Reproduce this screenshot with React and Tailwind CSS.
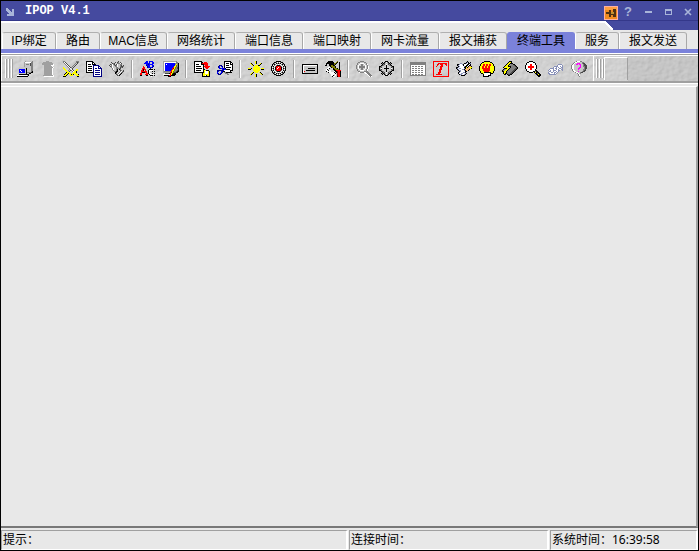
import { useState } from "react";
import clsx from "clsx";

const PALETTE = {
  k: "#000000",
  w: "#ffffff",
  g: "#808080",
  h: "#a0a0a0",
  s: "#c6c6c6",
  d: "#484848",
  y: "#ffff00",
  o: "#808000",
  r: "#ff0000",
  e: "#800000",
  b: "#0000ff",
  n: "#000080",
  m: "#ff00ff",
  p: "#8890b8",
  t: "#ffb870",
};

const ICONS = {
  connect: [
    "........hssssssg",
    ".......hwwwwwwgg",
    ".......hsssssdgg",
    ".......hsgggsdgg",
    ".......hsssssdgg",
    ".......hssssssgg",
    "..ssssssssssssgg",
    ".sssssssskssssgg",
    ".sbbbbbbskssssgg",
    ".sbwbbbbskssssgg",
    ".sbbwbbbskssssgk",
    ".sbbbbbbskggggkk",
    ".ssssssssksskk..",
    "..kkkkkkkkkk....",
    "wwwwwwwwwwsk....",
    "kkkkkkkkkkk.....",
  ],
  remove: [
    "......hhh.......",
    "...hhhhhhhhh....",
    "..hhhhhhhhhhh...",
    "..hhhhhhhhhhhw..",
    "....hhhhhhhwww..",
    "....hhhhhhhhw...",
    "....hhhhhhhhhw..",
    "....hhhhhhhhw...",
    "....hhhhhhhhw...",
    "....hhhhhhhhw...",
    "....hhhhhhhhw...",
    "....hhhhhhhhw...",
    "....hhhhhhhhw...",
    "....hhhhhhhhw...",
    "...hhhhhhhhhhw..",
    "....wwwwwwwwww..",
  ],
  swords: [
    "gg...........ggg",
    "gwd..........gdg",
    ".gwd........gsd.",
    "..gwd......gsd..",
    "...gwd....gsd...",
    "....gwd..gsd....",
    "y....gwdgsd.....",
    "yy....gwsd......",
    ".yy...gswd...yy.",
    "..yy.gsdgwd.yyy.",
    "...yysd..gwyyk..",
    "...kyyy...yyyk..",
    "..kyykyy.yyyyy..",
    ".kyyk.yykyk.yyyk",
    ".yyk...yyy...yyy",
    "kkk...........kk",
  ],
  copy: [
    "kkkkkkk.........",
    "kwwwwwkk........",
    "kwwwwwkwk.......",
    "kwkkkwkkkk......",
    "kwwwwwwnnnnnn...",
    "kwkkkkwnwwwwnn..",
    "kwwwwwwnwwwwnwn.",
    "kwkkkkwnwnnwnnnn",
    "kwwwwwwnwwwwwwwn",
    "kwkkkkwnwnnnnnwn",
    "kwwwwwwnwwwwwwwn",
    "kkkkkkknwnnnnnwn",
    ".......nwwwwwwwn",
    ".......nwnnnnnwn",
    ".......nwwwwwwwn",
    ".......nnnnnnnnn",
  ],
  plugs: [
    ".........d......",
    "..d...d.dg.d....",
    "...dgd..gggwd...",
    ".dgwgd.dwssgg...",
    "d.gwsgdgwssgd.d.",
    ".dgwssggwssgddg.",
    "..gwsssggssdgd..",
    "...gwssggggd....",
    "...gwssgk.kg....",
    "....gssgk..dg.d.",
    ".....ggkk..gwgd.",
    "......kk..gwgd..",
    "......kg.gwgk...",
    ".......dgwgk....",
    "........dgk.....",
    "................",
  ],
  encoding: [
    "......bb.bbbb...",
    ".....bbb.b..bb..",
    "....bbbbbb..bb..",
    "......bbnbbbb...",
    "......nbbb..bb..",
    "...r...nbb..bn..",
    "...rr..nbbbbn...",
    "..rrr.....n.....",
    "..rkrr...kkkk.k.",
    ".rrk.r..kwwww...",
    ".rrrrrr.kw..k.k.",
    ".rkkkrr.kw......",
    "rr....rrkww.k.k.",
    "rr...rrr.kwwww..",
    "kk....kk..kkk.k.",
    "...........w....",
  ],
  display: [
    "hhhhhhhhhhhhhg..",
    "hwwwwwwwwwwwwgg.",
    "hwbbbbbbbbbbgggk",
    "hwbwbbbbbbbbgygk",
    "hwbbbbbbbbbbyogk",
    "hwbbbbbbbbbyyogk",
    "hwbbbbbbbbryogdk",
    "hwbbbbbbbreyogdk",
    "hwbbbbbbbryogggk",
    "hwbbbbbbryyoggdk",
    "hgggggggryoggdkk",
    "hhhhhhhreyoddkk.",
    "..ddddkryokkk...",
    "wwwwwwwrykkkk...",
    ".kkkkkrrkkkk....",
    ".....kkk........",
  ],
  exportFile: [
    "kkkkkkkk........",
    "kwwwwwwkk.rrr...",
    "kwwwwwwkrrrrrr..",
    "kwkkkwwkkkrrrr..",
    "kwwwwwwwwk.rrr..",
    "kwkkkkkwwkrrrrrr",
    "kwwwwwwwwk.rrrr.",
    "kwkkkkkkwk..rr..",
    "kwwwwwwwwkk.....",
    "kwkkkkkwwkyykkk.",
    "kwwwwwwwwkywwwyk",
    "kkkkkkkkkkywwwyk",
    "........kyywwwyk",
    "........kyyyyyyk",
    "........kyywkyyk",
    "........kkkkkkkk",
  ],
  cutFile: [
    ".......kkkkkkk..",
    ".......kwwwwwkk.",
    ".......kwkkkwkwk",
    ".......kwwwwwkkk",
    "..nnn..kwkkkwwwk",
    ".nb.bn.kwwwwwwwk",
    ".nb..b.kwkkkkkwk",
    "..bnbbnbkwwwwwwk",
    ".....bnbbkkkkwwk",
    "nnnnnnbwwwwwwkkk",
    "nb..bnkkwwwwwk..",
    "b...bn.ggkkkkkk.",
    "bn.bn...ggg.....",
    ".nnn......gg....",
    "................",
    "................",
  ],
  sun: [
    ".......yk.......",
    ".......yk.......",
    "..yk...yk...yk..",
    "...yk......yk...",
    "....yk.yyykk....",
    "......yyyyy.....",
    ".....yyyyyyy....",
    "yyyk.yyyyyyy.yyy",
    "kkk..yyyyyyy.kkk",
    ".....yyyyyyy....",
    "......yyyyy.....",
    "....yk.yyy.yk...",
    "...yk.......yk..",
    "..yk...yk....yk.",
    ".......yk.......",
    ".......yk.......",
  ],
  target: [
    ".....kkkkk......",
    "...kkgwgwgkk....",
    "..kgwkgkgkwgk...",
    ".kgkgwswswgkgk..",
    ".kwgwgkkkgwgwk..",
    "kgkwgerrregwkgk.",
    "kwgskrrwrrksgwk.",
    "kgkwkrwrrrkwkgk.",
    "kwgskrrrrrksgwk.",
    "kgkwgerrregwkgk.",
    ".kwgwgkkkgwgwk..",
    ".kgkgwswswgkgk..",
    "..kgwkgkgkwgk...",
    "...kkgwgwgkk....",
    ".....kkkkk......",
    "................",
  ],
  console: [
    "................",
    "................",
    "................",
    "kkkkkkkkkkkkkkkk",
    "kwwwwwwwwwwwwwwk",
    "kwsssssssssssssk",
    "kwsssssssssssssk",
    "kwsssskkkkkkkssk",
    "kwsssssssssssssk",
    "kwsskkkkkkkkkssk",
    "kwrssssssssssssk",
    "kwsssssssssssssk",
    "kkkkkkkkkkkkkkkk",
    "................",
    "................",
    "................",
  ],
  tools: [
    "...kkkkk....o...",
    "..kkkkkkk..ok.k.",
    ".kkkkkkkkook..k.",
    ".k..kkkkkok...k.",
    "kk..kkookk....k.",
    ".....kooook...k.",
    "...ww.koook...k.",
    "..wwk...koook.k.",
    ".wk.....kkooook.",
    ".wwkww...kkrrrrr",
    ".kwwww...wkkerrk",
    "...kwwwwwk.kerrk",
    ".....wwwwwk.errk",
    "......www.w.errk",
    "......wwk.w.errk",
    ".......kww..krrk",
  ],
  zoom: [
    "....gggg........",
    "..ggssssgg......",
    ".gsswwwwssg.....",
    ".gswsggswsgw....",
    "gsws.gg.swsg....",
    "gswggggggwsgw...",
    "gswggggggwsgw...",
    "gsws.gg.swsgw...",
    ".gswsggswsgw....",
    ".gsswwwwssgw....",
    "..ggssssgggg....",
    "...wggggwwggg...",
    ".........wwggg..",
    "...........wggg.",
    "............wggg",
    ".............wgw",
  ],
  gear: [
    "......kkk.......",
    "...k.kgwgk.k....",
    "..kgkdsssdkgk...",
    "...kgdswsdgk....",
    "..kdgs.k.sgdk...",
    "kkgs.s.k.s.sgkk.",
    "kgds...k...sdgk.",
    "ksws.kkkkk.swsk.",
    "kgds...k...sdgk.",
    "kkgs.s.k.s.sgkk.",
    "..kdgs.k.sgdk...",
    "...kgdswsdgk....",
    "..kgkdsssdkgk...",
    "...k.kgwgk.k....",
    "......kkk.......",
    "................",
  ],
  table: [
    "................",
    "gggggggggggggggg",
    "gggggggggggggggg",
    "gggggggggggggggg",
    "gwwwwwwwwwwwwwwg",
    "gwggwggwggwggwwg",
    "gwwwwwwwwwwwwwwg",
    "gwggwggwggwggwwg",
    "gwwwwwwwwwwwwwwg",
    "gwggwggwggwggwwg",
    "gwwwwwwwwwwwwwwg",
    "gwggwggwggwggwwg",
    "gwwwwwwwwwwwwwwg",
    "gwggwggwggwggwwg",
    "gggggggggggggggg",
    "................",
  ],
  font: [
    "rrrrrrrrrrrrrrrr",
    "r..............r",
    "r....rrrrrrrrr.r",
    "r...rr.rrr..rr.r",
    "r...r...rr...r.r",
    "r..r...rrr.....r",
    "r......rr......r",
    "r......rr......r",
    "r.....rrr......r",
    "r.....rr.......r",
    "r.....rr.......r",
    "r....rrr.......r",
    "r....rr........r",
    "r..rrrrrr......r",
    "r..............r",
    "rrrrrrrrrrrrrrrr",
  ],
  script: [
    "...........k....",
    "..........kpk.k.",
    "....pp..kkpwkkp.",
    ".kkpwwpkwwwkkwk.",
    ".kpwwwwkwwkkwkk.",
    "..kpwwwwpkkwkttk",
    "kkpwwwwwkkykttyy",
    "kpwppwwwpkttttyk",
    ".kpwwwppkttttk..",
    "..kppwwwpkttk...",
    "...kpwwwwkk.....",
    "..kpwwwppk......",
    "..kwwppwwpk.....",
    "...kppwwpk......",
    ".....kkkk.......",
    "................",
  ],
  hand: [
    ".....kkkkkk.....",
    "...kkyyyyyykk...",
    "..kyyyyyyyyyyk..",
    ".kyyrryrryrryyk.",
    ".kyyrryrryrryyk.",
    "kyyrryrryrryyyyk",
    "kyyrryrryrryyyyk",
    "kyyrrrrrrrryyyyk",
    "kyyyrrrrrrryyyyk",
    "kyyyrrrrrrryyyyk",
    ".kyyyrrrrryyyyk.",
    ".kyyykkkkkkkyyk.",
    "..kkywwwwwwkkk..",
    "....kwwwwwwk....",
    "....kwwwwkkk....",
    "....kkkkkk......",
  ],
  bolt: [
    ".......kkk......",
    "......kyyk......",
    ".....kyykkk.....",
    "....kyykhggkk...",
    "...kyykhggggdk..",
    "..kyyykkkggggdk.",
    ".kyyyyyykgggggdk",
    "..kkkyykgggggddk",
    ".kghyykgggggddk.",
    "kghyykgggggddk..",
    "kkyykgggggddk...",
    ".kyykggggddk....",
    ".kykkgggddk.....",
    "..kk.kddkk......",
    "......kk........",
    "................",
  ],
  magnify: [
    "....kkkk........",
    "..kkwwwwkk......",
    ".kwwwwwwwwk.....",
    ".kwwwrrwwwk.....",
    "kwwwwrrwwwwk....",
    "kwwrrrrrrwwk....",
    "kwwrrrrrrwwk....",
    "kwwwwrrwwwwk....",
    ".kwwwrrwwwk.....",
    ".kwwwwwwwwkk....",
    "..kkwwwwkkgkk...",
    "....kkkk.kykkk..",
    "..........kkgkk.",
    "...........kkykk",
    "............kkkk",
    ".............kk.",
  ],
  transfer: [
    "................",
    "................",
    "................",
    "..........pppp..",
    ".........pwwwwp.",
    "......ppppwwpwp.",
    ".....pwwpwpwwpp.",
    "..ppppwppwwpp.p.",
    ".pwwwpwwpwpwwpp.",
    "pwpwwpppwwpp..p.",
    ".ppwwpwwpwp.....",
    "pwwppwppwp......",
    "ppwwwwpwp.......",
    ".ppppppp........",
    "................",
    "................",
  ],
  help: [
    ".....gwwwgg.....",
    "...gwwsssssgg...",
    "..gwssmmmssgdd..",
    ".gwssmmsmmssgdd.",
    "gwwssssssmssgddd",
    "gwwssssssmssggdd",
    "gwwsssssmmsssgdd",
    "gwwssssmmssssgdd",
    ".gwssssmssssggd.",
    ".gwwssssssssgdd.",
    "..gwwssmsssgdd..",
    "....gwwssgdd....",
    "......gwsg......",
    ".......gws......",
    ".......gw.......",
    "........g.......",
  ],
};

const TOOL_GROUPS = [
  [
    ["connect", "连接"],
    ["remove", "删除"],
    ["swords", "断开"],
    ["copy", "复制"],
    ["plugs", "重连"],
  ],
  [
    ["encoding", "编码"],
    ["display", "显示设置"],
  ],
  [
    ["exportFile", "导出"],
    ["cutFile", "剪切"],
  ],
  [
    ["sun", "高亮"],
    ["target", "定位"],
  ],
  [
    ["console", "控制台"],
    ["tools", "工具"],
  ],
  [
    ["zoom", "缩放"],
    ["gear", "设置"],
  ],
  [
    ["table", "列表"],
    ["font", "字体"],
    ["script", "脚本"],
    ["hand", "停止"],
    ["bolt", "快速命令"],
    ["magnify", "查找"],
    ["transfer", "传输"],
    ["help", "帮助"],
  ],
];

const TABS = [
  ["IP绑定", "w-[54px]"],
  ["路由", "w-11"],
  ["MAC信息", "w-[67px]"],
  ["网络统计", "w-[68px]"],
  ["端口信息", "w-[68px]"],
  ["端口映射", "w-[68px]"],
  ["网卡流量", "w-[68px]"],
  ["报文捕获", "w-[68px]"],
  ["终端工具", "w-[68px]"],
  ["服务", "w-11"],
  ["报文发送", "w-[68px]"],
];

function PixelIcon({ name }) {
  return (
    <svg
      viewBox="0 0 16 16"
      className="w-4 h-4"
      shapeRendering="crispEdges"
      aria-hidden="true"
    >
      {ICONS[name].map((row, y) =>
        [...row].map((c, x) =>
          c === "." ? null : (
            <rect key={`${x}-${y}`} x={x} y={y} width="1" height="1" fill={PALETTE[c]} />
          )
        )
      )}
    </svg>
  );
}

function TitleBar() {
  const button = "w-5 h-[19px] pt-0.5 flex items-center justify-center text-[#a9b5d9]";

  return (
    <header>
      <div className="flex items-center h-5 bg-[#454a9f] border-b border-[#34388a]">
        <button aria-label="菜单" className="w-[18px] pt-0.5 flex justify-center text-[#a9b5d9]">
          <svg viewBox="0 0 8 8" className="w-2 h-2" shapeRendering="crispEdges">
            <path d="M0 0h2v1h1v1h1v1h1v1h1V1h2v7H1V6h2V5H2V4H1V3H0z" fill="currentColor" />
          </svg>
        </button>
        <h1 className="pl-1.5 flex-1 text-white text-[12px] leading-[18px] font-bold font-['Liberation_Mono',monospace]">
          IPOP V4.1
        </h1>
        <button aria-label="固定" className="w-3.5 h-[19px] pt-1 flex items-center">
          <svg viewBox="0 0 14 14" className="w-3.5 h-3.5" shapeRendering="crispEdges">
            <rect width="14" height="14" fill="#ffb0a0" />
            <rect x="1" y="1" width="12" height="12" fill="#f08a20" />
            <path d="M1 1h12v3H1z" fill="#ffa040" />
            <path d="M2 6h3v2H2zM5 4h2v2h2V3h3v8H9V9H7v2H5z" fill="#503010" />
            <path d="M7 6h3v2H7z" fill="#c09030" />
          </svg>
        </button>
        <button
          aria-label="帮助"
          className={clsx(button, "text-[13px] font-bold font-['Liberation_Sans',sans-serif]")}
        >
          ?
        </button>
        <button aria-label="最小化" className={button}>
          <svg viewBox="0 0 8 8" className="w-2 h-2" shapeRendering="crispEdges">
            <path d="M1 3h7v2H1z" fill="currentColor" />
          </svg>
        </button>
        <button aria-label="最大化" className={button}>
          <svg viewBox="0 0 8 8" className="w-2 h-2" shapeRendering="crispEdges">
            <path d="M1 1h7v6H1zM2 3v3h5V3z" fillRule="evenodd" fill="currentColor" />
          </svg>
        </button>
        <button aria-label="关闭" className={button}>
          <svg viewBox="0 0 8 8" className="w-2 h-2">
            <path d="M1 1l6 6M7 1L1 7" stroke="currentColor" strokeWidth="1.6" />
          </svg>
        </button>
      </div>
      <div className="flex h-[11px] items-start">
        <div className="flex-1 border-t-2 border-white" />
        <svg viewBox="0 0 10 9" className="w-2.5 h-[9px]" shapeRendering="crispEdges">
          <path d="M0 0h10v9z" fill="#454a9f" />
          <path d="M0 0l9 9" stroke="#fff" strokeWidth="2" />
        </svg>
        <div className="w-[84px] h-[9px] bg-[#454a9f]" />
      </div>
    </header>
  );
}

function TabBar({ active, onSelect }) {
  return (
    <nav
      role="tablist"
      className="flex pl-px border-b-4 border-[#7b82da] text-[12px] leading-[17px] whitespace-nowrap font-['Liberation_Sans','Noto_Sans_CJK_SC',sans-serif]"
    >
      {TABS.map(([tab, width]) => (
        <button
          key={tab}
          role="tab"
          aria-selected={tab === active}
          onClick={() => onSelect(tab)}
          className={clsx(
            "h-[17px] flex justify-center rounded-t-[3px] border-x border-t",
            width,
            tab === active
              ? "bg-[#7b82da] border-[#7b82da]"
              : "border-t-[#b0b0b0] border-l-white border-r-[#a8a8a8]"
          )}
        >
          {tab}
        </button>
      ))}
    </nav>
  );
}

function Texture() {
  return (
    <svg className="absolute inset-0 w-full h-full" aria-hidden="true">
      <filter id="stone" x="0" y="0" width="100%" height="100%">
        <feTurbulence type="fractalNoise" baseFrequency="0.2 0.24" numOctaves="2" seed="4" />
        <feDiffuseLighting surfaceScale="0.6" diffuseConstant="1.1" lightingColor="#d3d3d3">
          <feDistantLight azimuth="225" elevation="62" />
        </feDiffuseLighting>
      </filter>
      <rect width="100%" height="100%" filter="url(#stone)" />
    </svg>
  );
}

function Grip() {
  return (
    <div className="flex gap-px py-[3px]">
      <span className="w-0.5 border-l border-white border-r border-r-[#a0a0a0]" />
      <span className="w-0.5 border-l border-white border-r border-r-[#a0a0a0]" />
      <span className="w-0.5 border-l border-white border-r border-r-[#a0a0a0]" />
    </div>
  );
}

function ToolBar() {
  return (
    <div className="border-y border-white">
      <div className="relative h-[29px] bg-[#cacaca] border-t border-[#a0a0a0] border-b-2 border-b-[#a0a0a0]">
        <Texture />
        <div className="relative flex h-full pl-[3px] border-l border-t border-white">
          <Grip />
          <div className="flex items-center">
            {TOOL_GROUPS.map((group, i) => (
              <div key={group[0][0]} className="flex items-center">
                {i > 0 && (
                  <span className="w-0.5 h-[18px] mx-[3px] border-l border-l-[#a0a0a0] border-r border-r-white" />
                )}
                {group.map(([name, label]) => (
                  <button
                    key={name}
                    aria-label={label}
                    title={label}
                    className="w-[23px] h-[22px] flex items-center justify-center"
                  >
                    <PixelIcon name={name} />
                  </button>
                ))}
              </div>
            ))}
          </div>
          <div className="flex flex-1 ml-[3px] pl-0.5 border-l border-white">
            <Grip />
            <div className="w-6 my-px border-t border-l border-white border-r border-r-[#a0a0a0]" />
            <div className="flex-1 bg-black/5" />
          </div>
        </div>
      </div>
    </div>
  );
}

function StatusBar() {
  const panel =
    "h-5 pl-px border-t border-l border-[#a0a0a0] border-r-2 border-r-white border-b border-b-white";

  return (
    <footer className="flex gap-px pt-0.5 text-[12px] leading-[18px] whitespace-nowrap">
      <div className={clsx(panel, "flex-1")}>提示：</div>
      <div className={clsx(panel, "w-[200px]")}>连接时间：</div>
      <div className={clsx(panel, "w-[148px]")}>系统时间：16:39:58</div>
    </footer>
  );
}

export default function App() {
  const [active, setActive] = useState("终端工具");

  return (
    <div className="min-h-screen flex flex-col bg-[#e8e8e8] border border-black text-black font-['Noto_Sans','Noto_Sans_CJK_SC',sans-serif]">
      <TitleBar />
      <TabBar active={active} onSelect={setActive} />
      <ToolBar />
      <main className="flex-1 mt-0.5 border-t border-white border-b-2 border-b-[#787878] border-r-2 border-r-[#a0a0a0]" />
      <StatusBar />
    </div>
  );
}
